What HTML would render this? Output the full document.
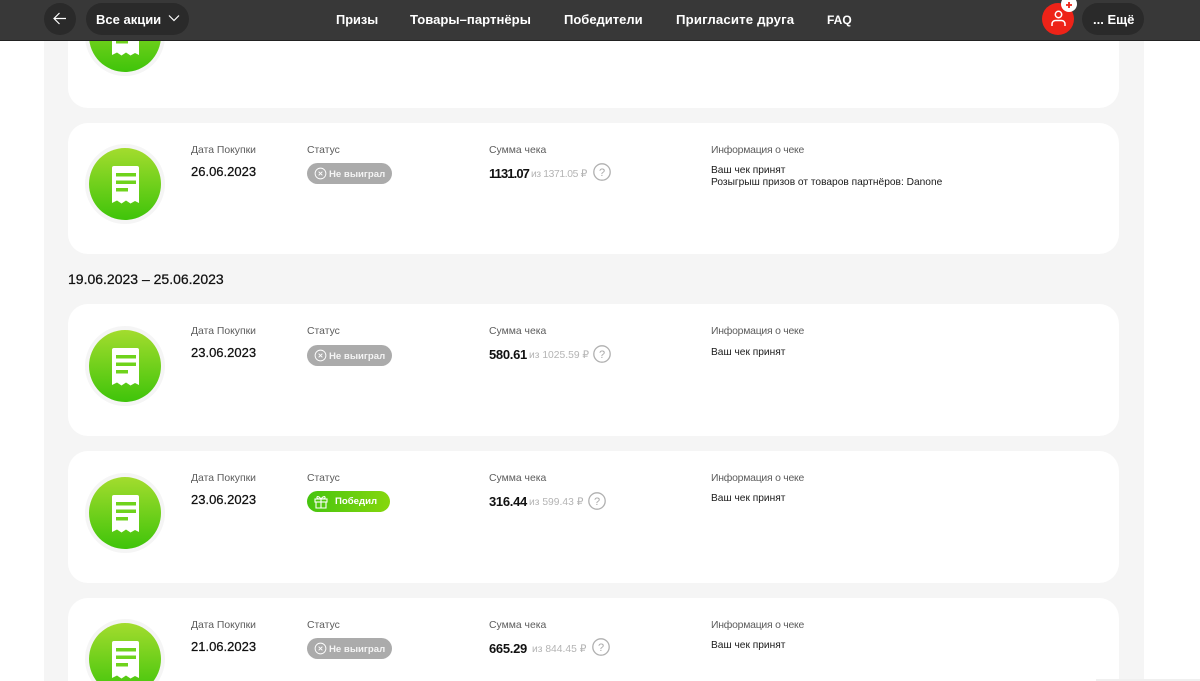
<!DOCTYPE html>
<html lang="ru">
<head>
<meta charset="utf-8">
<title>Чеки</title>
<style>
*{box-sizing:border-box}
html,body{margin:0;padding:0;width:1200px;height:681px;overflow:hidden;background:#fff;font-family:"Liberation Sans",sans-serif}
#p{position:relative;width:1200px;height:681px;overflow:hidden}
.panel{position:absolute;left:44px;top:0;width:1100px;height:681px;background:#f5f5f5}
.card{position:absolute;left:68px;width:1051px;background:#fff;border-radius:20px}
.t{position:absolute;white-space:nowrap;line-height:14px}
.hdr{position:absolute;left:0;top:0;width:1200px;height:41px;background:#383838;border-bottom:1px solid #222}
.nav{color:#fff;font-weight:bold;top:13px;font-size:13.2px}
.pill{position:absolute;background:#2a2a2a;border-radius:16px;height:32px;top:3px}
.lab{font-size:10.4px;color:#5c5c5c}
.ii{letter-spacing:-.22px}
.date{font-size:13px;color:#111;-webkit-text-stroke:.25px #111}
.sum{font-size:13px;color:#111;font-weight:bold;letter-spacing:-.3px}
.of{font-size:10.3px;color:#b4b4b4}
.inf{font-size:10.2px;color:#1a1a1a}
.st{position:absolute;height:21px;border-radius:11px;color:#fff;font-size:9.6px;font-weight:bold;line-height:21px}
.lose{background:#ababab;width:85px}
.lose span{color:#f4f4f4}
.win{background:linear-gradient(90deg,#46c40f,#86d70d);width:83px}
svg{position:absolute;display:block}
</style>
</head>
<body>
<div id="p">
<div class="panel"></div>

<div class="card" style="top:-24px;height:132px"></div>
<div class="card" style="top:123px;height:131px"></div>
<div class="card" style="top:304px;height:132px"></div>
<div class="card" style="top:451px;height:132px"></div>
<div class="card" style="top:598px;height:83px;border-radius:20px 20px 0 0"></div>
<div style="position:absolute;left:1096px;top:679px;width:104px;height:2px;background:#f0f0f0"></div>

<svg width="0" height="0" style="position:absolute">
<defs>
<linearGradient id="g" x1="0" y1="0" x2="0" y2="1"><stop offset="0" stop-color="#a3dc2e"/><stop offset="1" stop-color="#3fc40a"/></linearGradient>
<symbol id="rc" viewBox="0 0 80 80">
<circle cx="40" cy="40" r="40" fill="#f5f5f5"/>
<circle cx="40" cy="40" r="36" fill="url(#g)"/>
<path d="M27 24a2 2 0 0 1 2-2h23a2 2 0 0 1 2 2v35l-4-2-4.500 2.500-4.500-3-4.500 3-4.500-3-5 2.500z" fill="#fff"/>
<rect x="31" y="29" width="20" height="3.500" fill="#6fd31c"/>
<rect x="31" y="36.500" width="20" height="3.500" fill="#6fd31c"/>
<rect x="31" y="44" width="12" height="3.500" fill="#6fd31c"/>
</symbol>
<symbol id="q" viewBox="0 0 18 18">
<circle cx="9" cy="9" r="8.200" fill="none" stroke="#b0b0b0" stroke-width="1.300"/>
<text x="9" y="13" text-anchor="middle" font-family="Liberation Sans,sans-serif" font-size="11" fill="#a8a8a8">?</text>
</symbol>
<symbol id="x" viewBox="0 0 14 14">
<circle cx="7" cy="7" r="5.800" fill="none" stroke="#fff" stroke-width="1"/>
<path d="M5 5l4 4M9 5l-4 4" stroke="#fff" stroke-width="1" fill="none"/>
</symbol>
</defs>
</svg>

<svg style="left:85px;top:-4px" width="80" height="80"><use href="#rc"/></svg>
<svg style="left:85px;top:144px" width="80" height="80"><use href="#rc"/></svg>
<svg style="left:85px;top:326px" width="80" height="80"><use href="#rc"/></svg>
<svg style="left:85px;top:473px" width="80" height="80"><use href="#rc"/></svg>
<svg style="left:85px;top:619px" width="80" height="62" viewBox="0 0 80 62"><use href="#rc" width="80" height="80"/></svg>

<!-- Row 1 -->
<div class="t lab" style="left:191px;top:144px">Дата Покупки</div>
<div class="t date" style="left:191px;top:165px">26.06.2023</div>
<div class="t lab" style="left:307px;top:144px">Статус</div>
<div class="st lose" style="left:307px;top:163px"><svg style="left:7px;top:4px" width="13" height="13"><use href="#x"/></svg><span style="position:absolute;left:22px;top:1px;white-space:nowrap">Не выиграл</span></div>
<div class="t lab" style="left:489px;top:144px">Сумма чека</div>
<div class="t sum" style="left:489px;top:167px;letter-spacing:-.9px">1131.07</div>
<div class="t of" style="left:531px;top:168px;letter-spacing:-.35px">из 1371.05 ₽</div>
<svg style="left:593px;top:163px" width="18" height="18"><use href="#q"/></svg>
<div class="t lab ii" style="left:711px;top:144px">Информация о чеке</div>
<div class="t inf" style="left:711px;top:164px">Ваш чек принят</div>
<div class="t inf" style="left:711px;top:176px">Розыгрыш призов от товаров партнёров: Danone</div>

<div class="t" style="left:68px;top:272px;font-size:14px;color:#111;-webkit-text-stroke:.25px #111">19.06.2023 – 25.06.2023</div>

<!-- Row 2 -->
<div class="t lab" style="left:191px;top:325px">Дата Покупки</div>
<div class="t date" style="left:191px;top:346px">23.06.2023</div>
<div class="t lab" style="left:307px;top:325px">Статус</div>
<div class="st lose" style="left:307px;top:345px"><svg style="left:7px;top:4px" width="13" height="13"><use href="#x"/></svg><span style="position:absolute;left:22px;top:1px;white-space:nowrap">Не выиграл</span></div>
<div class="t lab" style="left:489px;top:325px">Сумма чека</div>
<div class="t sum" style="left:489px;top:348px">580.61</div>
<div class="t of" style="left:529px;top:349px">из 1025.59 ₽</div>
<svg style="left:593px;top:345px" width="18" height="18"><use href="#q"/></svg>
<div class="t lab ii" style="left:711px;top:325px">Информация о чеке</div>
<div class="t inf" style="left:711px;top:346px">Ваш чек принят</div>

<!-- Row 3 -->
<div class="t lab" style="left:191px;top:472px">Дата Покупки</div>
<div class="t date" style="left:191px;top:493px">23.06.2023</div>
<div class="t lab" style="left:307px;top:472px">Статус</div>
<div class="st win" style="left:307px;top:491px">
<svg style="left:7px;top:4px" width="14" height="14" viewBox="0 0 14 14" fill="none" stroke="#fff" stroke-width="1.100"><rect x="1" y="4" width="12" height="3"/><path d="M2 7v6h10V7M7 4v9M7 4C5 1 2.500 1 3 3c.2 1 2 1 4 1zM7 4c2-3 4.500-3 4-1-.2 1-2 1-4 1z"/></svg>
<span style="position:absolute;left:28px;top:0;white-space:nowrap">Победил</span></div>
<div class="t lab" style="left:489px;top:472px">Сумма чека</div>
<div class="t sum" style="left:489px;top:495px">316.44</div>
<div class="t of" style="left:529px;top:496px">из 599.43 ₽</div>
<svg style="left:588px;top:492px" width="18" height="18"><use href="#q"/></svg>
<div class="t lab ii" style="left:711px;top:472px">Информация о чеке</div>
<div class="t inf" style="left:711px;top:492px">Ваш чек принят</div>

<!-- Row 4 -->
<div class="t lab" style="left:191px;top:619px">Дата Покупки</div>
<div class="t date" style="left:191px;top:640px">21.06.2023</div>
<div class="t lab" style="left:307px;top:619px">Статус</div>
<div class="st lose" style="left:307px;top:638px"><svg style="left:7px;top:4px" width="13" height="13"><use href="#x"/></svg><span style="position:absolute;left:22px;top:1px;white-space:nowrap">Не выиграл</span></div>
<div class="t lab" style="left:489px;top:619px">Сумма чека</div>
<div class="t sum" style="left:489px;top:642px">665.29</div>
<div class="t of" style="left:532px;top:643px">из 844.45 ₽</div>
<svg style="left:592px;top:638px" width="18" height="18"><use href="#q"/></svg>
<div class="t lab ii" style="left:711px;top:619px">Информация о чеке</div>
<div class="t inf" style="left:711px;top:639px">Ваш чек принят</div>

<!-- Header -->
<div class="hdr"></div>
<div class="pill" style="left:44px;width:32px"></div>
<svg style="left:53px;top:12px" width="13" height="13" viewBox="0 0 13 13" fill="none" stroke="#fff" stroke-width="1.200"><path d="M13 6.500H1M6.500 1L1 6.500 6.500 12"/></svg>
<div class="pill" style="left:86px;width:103px"></div>
<div class="t nav" style="left:96px;font-size:13px">Все акции</div>
<svg style="left:168px;top:14px" width="12" height="9" viewBox="0 0 12 9" fill="none" stroke="#fff" stroke-width="1.200"><path d="M1 1.500l5 5 5-5"/></svg>
<div class="t nav" style="left:336px;font-size:12.800px">Призы</div>
<div class="t nav" style="left:410px;font-size:13.100px;letter-spacing:.02px">Товары–партнёры</div>
<div class="t nav" style="left:564px;font-size:13px">Победители</div>
<div class="t nav" style="left:676px;font-size:13.200px;letter-spacing:.15px">Пригласите друга</div>
<div class="t nav" style="left:827px;font-size:12px">FAQ</div>

<div style="position:absolute;left:1042px;top:3px;width:32px;height:32px;border-radius:50%;background:#ee2318"></div>
<svg style="left:1051px;top:10px" width="15" height="17" viewBox="0 0 15 17" fill="none" stroke="#fff" stroke-width="1.500"><circle cx="7.500" cy="4.500" r="3.200"/><path d="M1 16v-2a3.500 3.500 0 0 1 3.500-3.500h6A3.500 3.500 0 0 1 14 14v2"/></svg>
<div style="position:absolute;left:1061px;top:-4px;width:16px;height:16px;border-radius:50%;background:#fff"></div>
<svg style="left:1066px;top:2px" width="6" height="6" viewBox="0 0 6 6"><path d="M3 0v6M0 3h6" stroke="#ee2318" stroke-width="1.800"/></svg>
<div class="pill" style="left:1082px;width:62px"></div>
<div class="t nav" style="left:1093px;font-size:13px">... Ещё</div>
</div>
</body>
</html>
